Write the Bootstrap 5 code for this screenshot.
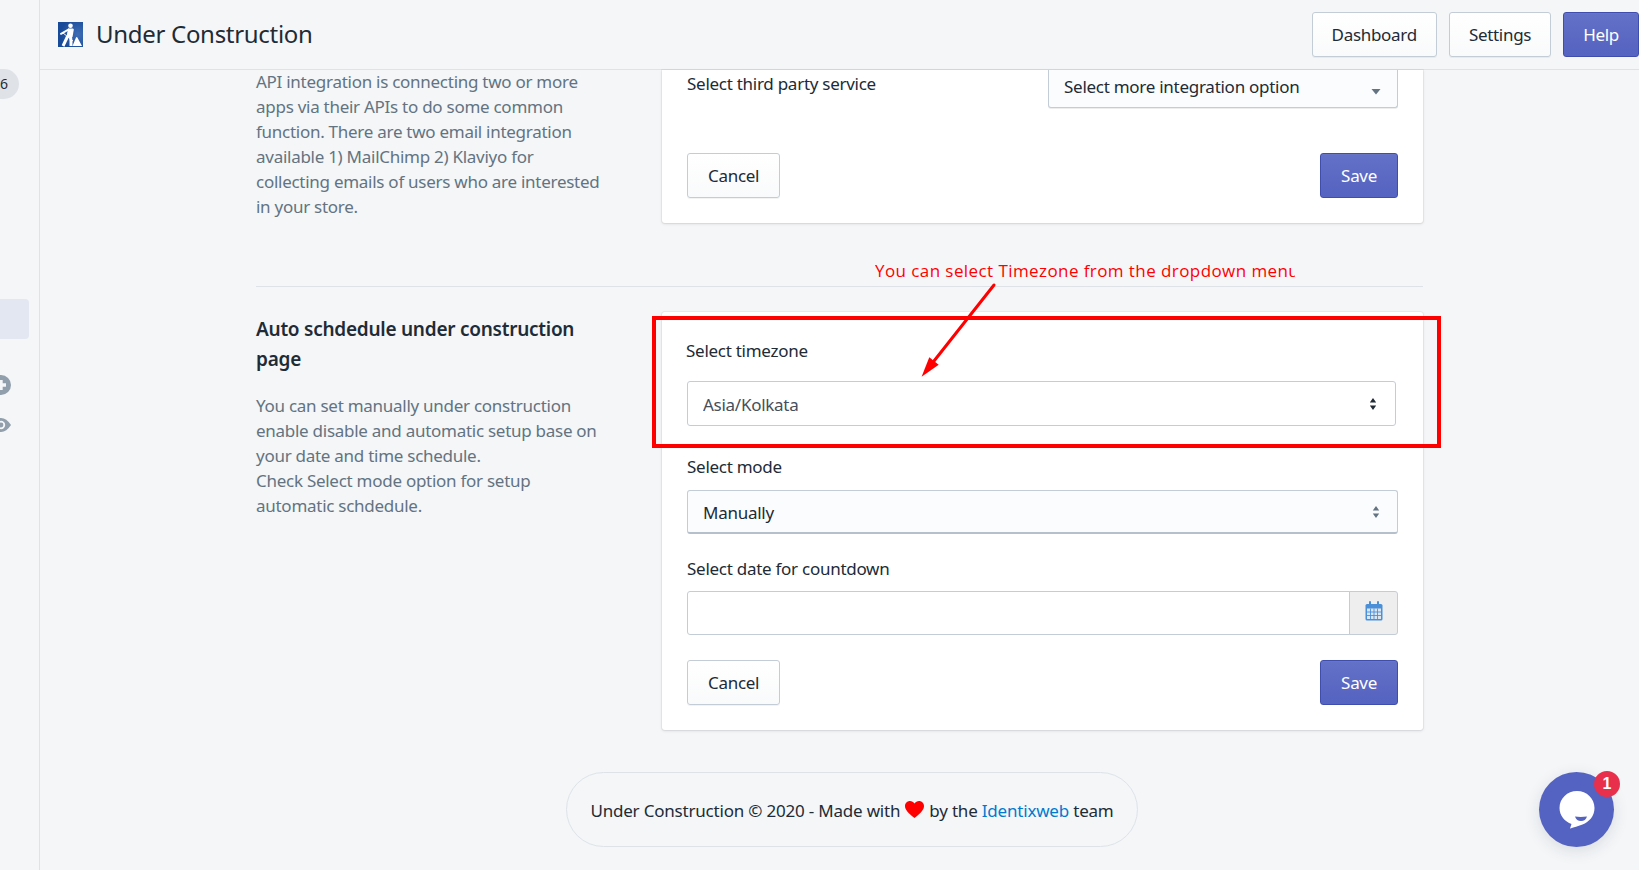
<!DOCTYPE html>
<html lang="en">
<head>
  <meta charset="UTF-8" />
  <meta name="viewport" content="width=device-width, initial-scale=1" />
  <title>Under Construction</title>
  <link href="https://cdn.jsdelivr.net/npm/bootstrap@5.3.3/dist/css/bootstrap.min.css" rel="stylesheet" />
  <style>
    html, body { height: 870px; overflow: hidden; }
    body { background: #f4f6f8; color: #212b36; font-family: "Noto Sans", "Open Sans", sans-serif; font-size: 17px; letter-spacing: -.27px; line-height: 25px; }

    .app-shell { position: relative; width: 1639px; height: 870px; overflow: hidden; }
    .side-rail { width: 40px; border-right: 1px solid #dfe3e8; overflow: hidden; }
    .rail-count { width: 38px; height: 30px; margin: 69px 0 0 -19px; border-radius: 15px; background: #dfe3e8; font-size: 14px; line-height: 30px; padding-left: 19px; }
    .rail-active { width: 39px; height: 40px; margin: 200px 0 0 -10px; border-radius: 4px; background: #e2e7f1; }
    .rail-icon { display: block; margin-left: -10px; }
    .rail-plus { margin-top: 35px; }
    .rail-eye { margin-top: 21px; }

    .top-strip { height: 70px; border-bottom: 1px solid #dfe3e8; padding-left: 18px; }
    .strip-title { font-size: 24px; margin: -2px 0 0 13px; letter-spacing: -.3px; }
    .strip-btns { gap: 12px; }

    .btn-plain, .btn-indigo { height: 45px; padding: 0 19px; font-size: 17px; letter-spacing: -.3px; line-height: 43px; border-radius: 3px; }
    .panel .btn-plain, .panel .btn-indigo { padding: 0 20px; }
    .btn-plain { background: linear-gradient(#fff, #f9fafb); border: 1px solid #c4cdd5; color: #212b36; box-shadow: 0 1px 0 rgba(22,29,37,.05); }
    .btn-indigo { background: linear-gradient(#6371c7, #5563c1); border: 1px solid #3f4eae; color: #fff; box-shadow: inset 0 1px 0 #6774c8; }

    .page-body { width: 1167px; margin-left: 216px; }
    .sect-row { display: flex; }
    .sect-text { width: 406px; flex: none; }
    .sect-note { color: #637381; margin: 0; }
    .sect-note-top { margin-top: -1px; }
    .sect-head { font-size: 19px; font-weight: 600; line-height: 30px; margin: 0 0 19px; padding-top: 2px; color: #212b36; letter-spacing: -.25px; }
    .sect-rule { border-top: 1px solid #dfe3e8; margin: 63px 0 25px; }

    .panel { width: 761px; border: 0; border-radius: 3px; background: #fff; box-shadow: 0 0 0 1px rgba(63,63,68,.05), 0 1px 3px 0 rgba(63,63,68,.15); }
    .panel-top { border-top-left-radius: 0; border-top-right-radius: 0; height: 153px; padding: 0 25px 25px; }
    .panel-full { height: 418px; padding: 26px 25px 25px; }

    .pick { font-size: 17px; letter-spacing: -.27px; line-height: 25px; color: #212b36; background-color: #fff; border: 1px solid #c4cdd5; border-radius: 3px; padding: 2px 40px 0 15px; height: 44px; box-shadow: none; background-position: right 16px center; background-size: 10px 14px; }
    .pick-more { width: 350px; height: 38px; padding: 0 40px 4px 15px; border-top: 0; border-top-left-radius: 0; border-top-right-radius: 0; background-color: #fbfcfd; box-shadow: 0 1px 0 rgba(22,29,37,.08); background-position: right 16px top 14px; background-image: url("data:image/svg+xml,%3Csvg xmlns='http://www.w3.org/2000/svg' viewBox='0 0 10 14'%3E%3Cpath fill='%23637381' d='M.5 5h9L5 10.500z'/%3E%3C/svg%3E"); }
    .pick-zone { width: 709px; height: 45px; color: #454f5b; background-position: right 17px center; background-image: url("data:image/svg+xml,%3Csvg xmlns='http://www.w3.org/2000/svg' viewBox='0 0 10 14'%3E%3Cpath fill='%23212b36' d='M5 1l3.200 4.500H1.800zM5 13L1.800 8.500h6.400z'/%3E%3C/svg%3E"); }
    .pick-mode { width: 711px; background-color: #fbfcfd; color: #212b36; border-bottom: 2px solid #b6c0cc; background-image: url("data:image/svg+xml,%3Csvg xmlns='http://www.w3.org/2000/svg' viewBox='0 0 10 14'%3E%3Cpath fill='%23637381' d='M5 1l3.200 4.500H1.800zM5 13L1.800 8.500h6.400z'/%3E%3C/svg%3E"); }

    .field-label { display: block; margin: 0; line-height: 25px; }
    .label-third { margin-top: 1px; }
    .label-zone { margin-left: -1px; }
    .gap-zone { margin-top: 18px; }
    .gap-label { margin-top: 28px; }
    .gap-field { margin-top: 11px; }
    .gap-date { margin-top: 22px; }
    .date-group { width: 711px; height: 44px; margin-top: 10px; }
    .date-group .form-control { height: 44px; border-color: #c4cdd5; border-radius: 3px 0 0 3px; box-shadow: none; }
    .date-addon { width: 49px; justify-content: center; padding: 0 0 4px; background: #eee; border-color: #c4cdd5; border-radius: 0 3px 3px 0; }

    .foot-pill { width: 572px; height: 75px; margin: 42px 0 0 310px; padding-top: 2px; border: 1px solid #dfe3e8; border-radius: 38px; gap: 5px; letter-spacing: -.2px; }
    .foot-pill a { color: #007ace; text-decoration: none; }
    .foot-pill svg { margin-top: -2px; }

    .mark-box { position: absolute; left: 652px; top: 316px; width: 789px; height: 132px; border: 4px solid #f00; }
    .mark-arrow { position: absolute; left: 915px; top: 280px; }
    .mark-text { position: absolute; left: 875px; top: 258px; width: 420px; height: 26px; overflow: hidden; white-space: nowrap; color: #f00; font-family: "Open Sans", sans-serif; font-size: 17px; letter-spacing: .42px; }

    .chat-bubble { position: absolute; left: 1539px; top: 772px; width: 75px; height: 75px; border-radius: 50%; background: #5462c1; box-shadow: 0 4px 16px rgba(33,43,54,.12); }
    .chat-count { position: absolute; left: 1594px; top: 771px; width: 26px; height: 26px; border-radius: 50%; background: #e8304c; color: #fff; font-family: "Liberation Sans", sans-serif; font-weight: 700; font-size: 16px; line-height: 26px; text-align: center; letter-spacing: 0; }
  </style>
</head>
<body>
  <div class="app-shell d-flex">

    <!-- left rail -->
    <div class="side-rail flex-shrink-0">
      <div class="rail-count">6</div>
      <div class="rail-active"></div>
      <svg class="rail-icon rail-plus" width="22" height="22" viewBox="0 0 22 22"><circle cx="11" cy="11" r="10" fill="#919eab"/><path d="M11 6v10M6 11h10" stroke="#f4f6f8" stroke-width="3.400"/></svg>
      <svg class="rail-icon rail-eye" width="22" height="16" viewBox="0 0 22 16"><path d="M1 8c3-4.800 6.400-7 10-7s7 2.200 10 7c-3 4.800-6.400 7-10 7S4 12.800 1 8z" fill="#919eab"/><circle cx="11" cy="8" r="4.200" fill="#f4f6f8"/><circle cx="11" cy="8" r="2.400" fill="#919eab"/></svg>
    </div>

    <div class="flex-grow-1">
      <!-- top bar -->
      <div class="top-strip d-flex align-items-center justify-content-between">
        <div class="d-flex align-items-center">
          <svg width="25" height="25" viewBox="0 0 25 25">
            <defs><radialGradient id="logoBg" cx=".8" cy=".5" r=".7"><stop offset="0" stop-color="#3f6db5"/><stop offset="1" stop-color="#174a98"/></radialGradient></defs>
            <rect width="25" height="25" fill="url(#logoBg)"/>
            <circle cx="12.500" cy="3.700" r="2.300" fill="#fff"/>
            <path d="M10 6.500h4.500c.8 0 1.300.6 1.300 1.300L14.500 15H8.500z" fill="#fff"/>
            <path d="M10.500 7.500L3 11.800M14 8.500l-1.500 4" stroke="#fff" stroke-width="2" fill="none" stroke-linecap="round"/>
            <path d="M4.500 10.500l10.500 8.500" stroke="#fff" stroke-width="1" fill="none"/>
            <path d="M9.500 14.500L5 24M12.500 14.500l.5 4.500v5" stroke="#fff" stroke-width="3" fill="none"/>
            <path d="M14.500 24l3.500-8.500c.3-.7 1.100-.7 1.400 0L24 24z" fill="#fff"/>
          </svg>
          <span class="strip-title">Under Construction</span>
        </div>
        <div class="d-flex strip-btns">
          <button type="button" class="btn btn-plain">Dashboard</button>
          <button type="button" class="btn btn-plain">Settings</button>
          <button type="button" class="btn btn-indigo">Help</button>
        </div>
      </div>

      <div class="page-body">
        <!-- integration section, scrolled under the bar -->
        <div class="sect-row">
          <div class="sect-text">
            <p class="sect-note sect-note-top">API integration is connecting two or more<br>apps via their APIs to do some common<br>function. There are two email integration<br>available 1) MailChimp 2) Klaviyo for<br>collecting emails of users who are interested<br>in your store.</p>
          </div>
          <div class="card panel panel-top">
            <div class="d-flex justify-content-between">
              <span class="field-label label-third">Select third party service</span>
              <select class="form-select pick pick-more"><option>Select more integration option</option></select>
            </div>
            <div class="d-flex justify-content-between mt-auto">
              <button type="button" class="btn btn-plain">Cancel</button>
              <button type="button" class="btn btn-indigo">Save</button>
            </div>
          </div>
        </div>

        <div class="sect-rule"></div>

        <!-- schedule section -->
        <div class="sect-row">
          <div class="sect-text">
            <h2 class="sect-head">Auto schdedule under construction<br>page</h2>
            <p class="sect-note">You can set manually under construction<br>enable disable and automatic setup base on<br>your date and time schedule.<br>Check Select mode option for setup<br>automatic schdedule.</p>
          </div>
          <div class="card panel panel-full">
            <label class="field-label label-zone">Select timezone</label>
            <select class="form-select pick pick-zone gap-zone"><option>Asia/Kolkata</option></select>
            <label class="field-label gap-label">Select mode</label>
            <select class="form-select pick pick-mode gap-field"><option>Manually</option></select>
            <label class="field-label gap-date">Select date for countdown</label>
            <div class="input-group date-group">
              <input type="text" class="form-control" />
              <span class="input-group-text date-addon">
                <svg width="18" height="20" viewBox="0 0 18 20">
                  <rect x=".5" y="3" width="17" height="16.500" rx="1.500" fill="#4a90d9"/>
                  <rect x="2" y="7.500" width="14" height="10.500" fill="#dbe6f3"/>
                  <path d="M2 11h14M2 14.500h14M5.500 7.500V18M9 7.500V18M12.500 7.500V18" stroke="#4a90d9" stroke-width=".9"/>
                  <path d="M5 1v3.500M13 1v3.500" stroke="#4a90d9" stroke-width="2" stroke-linecap="round"/>
                </svg>
              </span>
            </div>
            <div class="d-flex justify-content-between mt-auto">
              <button type="button" class="btn btn-plain">Cancel</button>
              <button type="button" class="btn btn-indigo">Save</button>
            </div>
          </div>
        </div>

        <!-- footer -->
        <div class="foot-pill d-flex align-items-center justify-content-center">
          <span>Under Construction © 2020 - Made with</span>
          <svg width="19" height="17" viewBox="0 0 19 17"><path d="M9.500 17C3 11.800 0 8.800 0 5c0-2.800 2.200-5 5-5 1.800 0 3.500 1 4.500 2.500C10.500 1 12.200 0 14 0c2.800 0 5 2.200 5 5 0 3.800-3 6.800-9.500 12z" fill="#f00"/></svg>
          <span>by the <a href="#">Identixweb</a> team</span>
        </div>
      </div>
    </div>

    <!-- annotations on top of the shot -->
    <div class="mark-text">You can select Timezone from the dropdown menu</div>
    <div class="mark-box"></div>
    <svg class="mark-arrow" width="85" height="102" viewBox="0 0 85 102">
      <path d="M79 5L19 81" stroke="#f00" stroke-width="3" stroke-linecap="round"/>
      <path d="M6.600 96.700L14.300 77.300 23.700 84.700z" fill="#f00"/>
    </svg>

    <!-- chat launcher -->
    <div class="chat-bubble d-flex align-items-center justify-content-center">
      <svg width="36" height="40" viewBox="0 0 36 40">
        <path d="M18 1c9.700 0 17.500 7.500 17.500 17 0 8.200-5.500 14-12 16.500C18 36.500 11 38.500 11 38.500l1.500-4.500C5.800 31.500.5 25.800.5 18 .5 8.500 8.300 1 18 1z" fill="#fff"/>
        <path d="M16 26.500c3.500.6 7.500.6 12 0-1 3-3 4.500-6 4.500s-5-1.500-6-4.500z" fill="#5462c1"/>
      </svg>
    </div>
    <div class="chat-count">1</div>
  </div>

  <script src="https://cdn.jsdelivr.net/npm/bootstrap@5.3.3/dist/js/bootstrap.bundle.min.js"></script>
</body>
</html>
